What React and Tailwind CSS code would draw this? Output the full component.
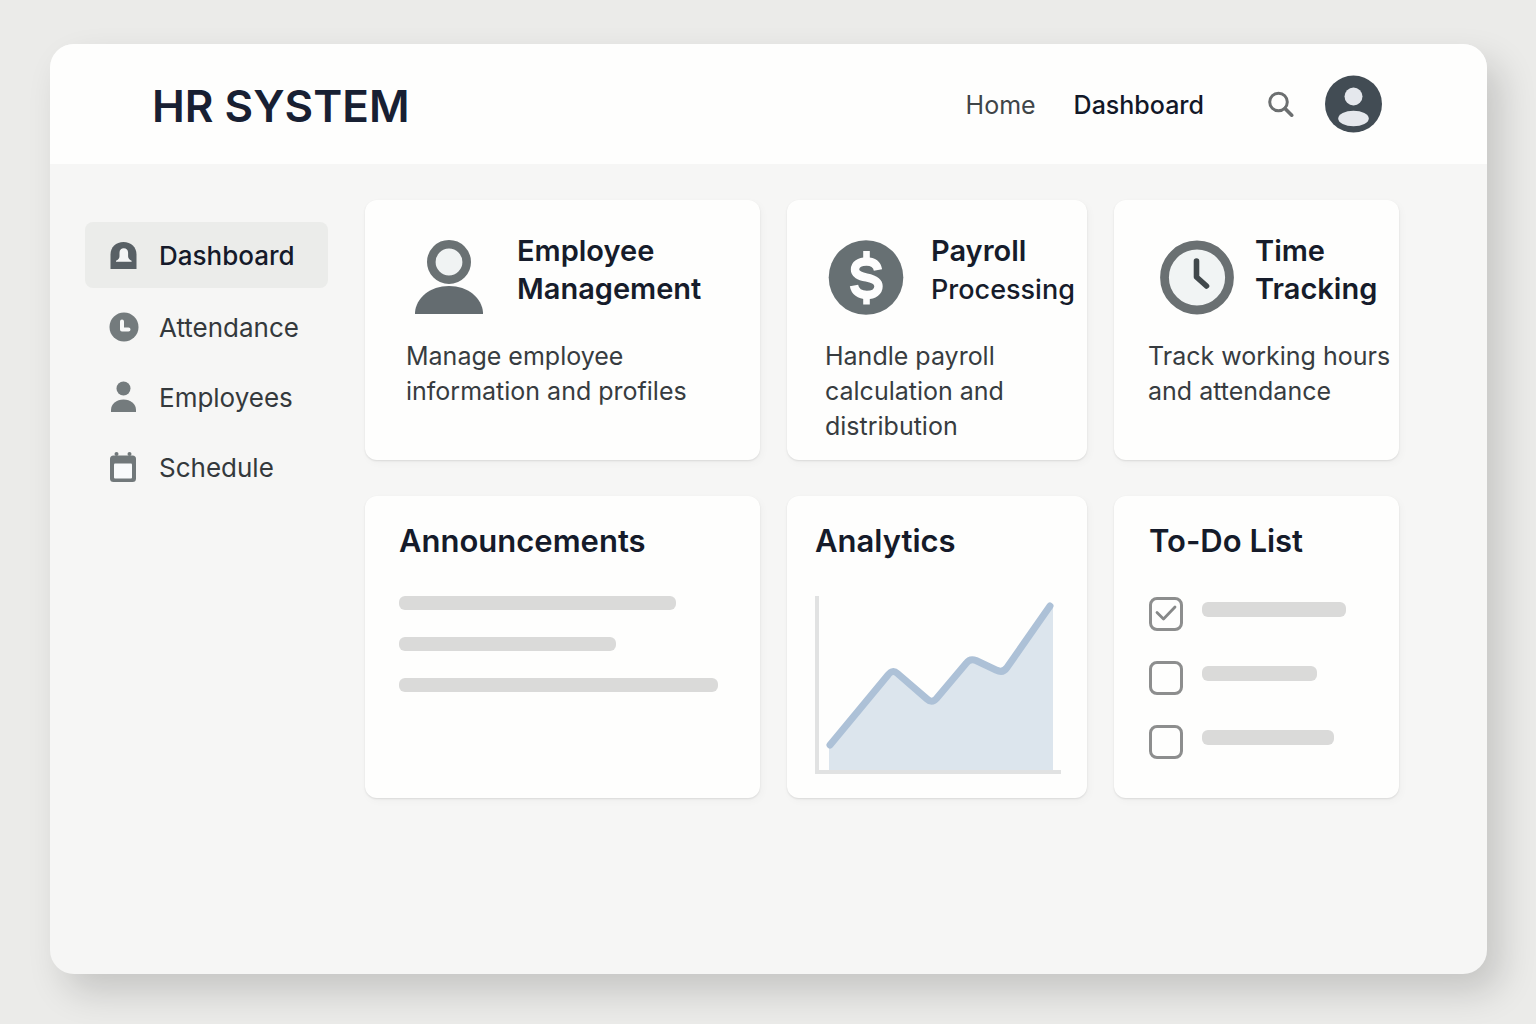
import React, { useState } from 'react';

const menuItems = [
    { name: 'Dashboard', icon: HomeIcon },
    { name: 'Attendance', icon: AttendanceIcon },
    { name: 'Employees', icon: EmployeesIcon },
    { name: 'Schedule', icon: ScheduleIcon },
];

const announcements = [
    { id: 1, width: 277 },
    { id: 2, width: 217 },
    { id: 3, width: 319 },
];

function HomeIcon() {
    return (
        <svg width="30" height="30" viewBox="0 0 30 30" aria-hidden="true">
            <path d="M1.500 29V14.500C1.500 7 7 2 14.500 2s13 5 13 12.500V29z" fill="#586065" />
            <path d="M7 21.700v-1c2-1 3.500-2 3.500-4.500v-3.500c0-2.800 1.700-4.400 4.300-4.400s4.300 1.600 4.300 4.400v3.500c0 2.500 1.500 3.500 3.500 4.500v1z" fill="#f4f5f5" />
        </svg>
    );
}

function AttendanceIcon() {
    return (
        <svg width="30" height="30" viewBox="0 0 30 30" aria-hidden="true">
            <circle cx="15" cy="15" r="14.500" fill="#747b7d" />
            <path d="M13 9.500v8h6.500" fill="none" stroke="#f8f9f9" strokeWidth="4" strokeLinecap="round" strokeLinejoin="round" />
        </svg>
    );
}

function EmployeesIcon() {
    return (
        <svg width="30" height="32" viewBox="0 0 30 32" aria-hidden="true">
            <circle cx="14.500" cy="7.500" r="7" fill="#747b7d" />
            <path d="M2 31v-2c0-6 5.500-10.500 12.500-10.500S27 23 27 29v2z" fill="#747b7d" />
        </svg>
    );
}

function ScheduleIcon() {
    return (
        <svg width="30" height="32" viewBox="0 0 30 32" aria-hidden="true">
            <rect x="1" y="4.500" width="26" height="26.500" rx="3.500" fill="#71787a" />
            <rect x="5" y="12.500" width="18" height="15" rx="1" fill="#f8fafb" />
            <circle cx="7.500" cy="3" r="2" fill="#71787a" />
            <circle cx="20.500" cy="3" r="2" fill="#71787a" />
        </svg>
    );
}

const ManagementIcon = () => (
    <svg width="70" height="76" viewBox="0 0 70 76" className="shrink-0" aria-hidden="true">
        <circle cx="34" cy="23" r="17.700" fill="#f0f3f3" stroke="#6a7173" strokeWidth="8.600" />
        <path d="M0 75v-1.500C1 59 15 47 34 47s33 12 34 26.500V75z" fill="#646c70" />
    </svg>
);

const PayrollIcon = () => (
    <svg width="76" height="76" viewBox="0 0 76 76" className="shrink-0" aria-hidden="true">
        <circle cx="38" cy="38.500" r="37.300" fill="#677073" />
        <g fill="none" stroke="#fdfdfd">
            <path
                d="M50 31C49 25.500 45 22.500 38.500 22.500c-7 0-11.500 3.300-11.500 8 0 4.600 4 6.500 11.500 8s12 3.500 12 8.700c0 5.300-4.700 8.800-11.700 8.800-7.300 0-11.800-3.500-12.800-9.500"
                strokeWidth="8.400"
            />
            <path d="M38.500 12v8M38.500 58v7.500" strokeWidth="6.600" />
        </g>
    </svg>
);

const TimeIcon = () => (
    <svg width="76" height="76" viewBox="0 0 76 76" className="shrink-0" aria-hidden="true">
        <circle cx="38" cy="38.500" r="32.500" fill="#f1f4f4" stroke="#6a7072" strokeWidth="8.800" />
        <path d="M37.500 22v16l10 9" fill="none" stroke="#41484b" strokeWidth="5.600" strokeLinecap="round" strokeLinejoin="round" />
    </svg>
);

const AnalyticsChart = () => (
    <svg width="248" height="178" viewBox="0 0 248 178" role="img" aria-label="Analytics">
        <path d="M14 149L77 76l40 31 39-43 31 12L235 10h3v164H14z" fill="#dce5ed" />
        <path d="M2 0v176h244" fill="none" stroke="#e1e2e2" strokeWidth="4" />
        <path
            d="M15 149L73 79q4.500-6 9.500-1.500L112 103q5 4.500 9.500-.5L151 67.500q4-5.500 10-3l20 9.500q7 3.500 11-2.500L235 10"
            fill="none"
            stroke="#adc1d7"
            strokeWidth="7"
            strokeLinecap="round"
            strokeLinejoin="round"
        />
    </svg>
);

const Card = ({ className, children }) => (
    <section className={`rounded-xl bg-[#fefefd] shadow-[0_1px_2px_rgba(0,0,0,0.10),2px_3px_8px_rgba(0,0,0,0.03)] ${className}`}>
        {children}
    </section>
);

const Header = () => (
    <header className="flex items-center justify-between bg-[#fefefd] h-[120px] pl-[102px] pr-[104px]">
        <h1 className="text-[44px] font-semibold text-[#182033] leading-none pt-1">HR SYSTEM</h1>
        <div className="flex items-center">
            <nav className="flex items-center gap-[38px] pt-1 text-[25px]">
                <a href="#home" className="text-[#3f4548]">Home</a>
                <a href="#dashboard" className="font-medium text-[#121828]">Dashboard</a>
            </nav>
            <button type="button" aria-label="Search" className="ml-16">
                <svg width="26" height="26" viewBox="0 0 26 26" fill="none" stroke="#6c6f70" strokeLinecap="round" aria-hidden="true">
                    <circle cx="10.500" cy="11" r="8.800" strokeWidth="3" />
                    <path d="M17 17.500l6.700 6.700" strokeWidth="3.600" />
                </svg>
            </button>
            <button type="button" aria-label="Account" className="ml-[31px]">
                <svg width="58" height="58" viewBox="0 0 58 58" aria-hidden="true">
                    <circle cx="28.500" cy="29" r="28.500" fill="#424c54" />
                    <circle cx="28.500" cy="21.500" r="9" fill="#e5e8ed" />
                    <ellipse cx="28.500" cy="43.500" rx="15.300" ry="7.700" fill="#e5e8ed" />
                </svg>
            </button>
        </div>
    </header>
);

const Sidebar = () => (
    <nav className="w-[243px] shrink-0 pt-[22px]">
        <ul>
            {menuItems.map(({ name, icon: Icon }, index) => (
                <li key={name}>
                    <a
                        href={`#${name.toLowerCase()}`}
                        className={`flex items-center gap-5 pl-6 text-[26px] ${
                            index === 0
                                ? 'h-[66px] mb-1 rounded-lg bg-[#ebecea] font-medium text-[#151a2a]'
                                : 'h-[70px] text-[#34393c]'
                        }`}
                    >
                        <Icon />
                        {name}
                    </a>
                </li>
            ))}
        </ul>
    </nav>
);

const TodoList = () => {
    const [todos, setTodos] = useState([
        { id: 1, width: 144, done: true },
        { id: 2, width: 115, done: false },
        { id: 3, width: 132, done: false },
    ]);

    const toggle = (id) => setTodos(todos.map((t) => (t.id === id ? { ...t, done: !t.done } : t)));

    return (
        <ul className="mt-9 flex flex-col gap-[30px]">
            {todos.map((todo) => (
                <li key={todo.id}>
                    <label className="flex items-start gap-[19px]">
                        <span className="grid">
                            <input
                                type="checkbox"
                                aria-label={`Task ${todo.id}`}
                                checked={todo.done}
                                onChange={() => toggle(todo.id)}
                                className="col-start-1 row-start-1 appearance-none size-[34px] rounded-lg border-[3px] border-[#8d8e8e]"
                            />
                            {todo.done && (
                                <svg width="34" height="34" viewBox="0 0 34 34" className="col-start-1 row-start-1 pointer-events-none" aria-hidden="true">
                                    <path d="M8 15.500l6.500 6.500L26 10" fill="none" stroke="#868888" strokeWidth="2.800" strokeLinecap="round" strokeLinejoin="round" />
                                </svg>
                            )}
                        </span>
                        <span className="mt-[5px] h-[15px] rounded-md bg-[#dadad9]" style={{ width: todo.width }} />
                    </label>
                </li>
            ))}
        </ul>
    );
};

const App = () => {
    return (
        <div className="min-h-screen flex bg-[#ebebe9] pt-11 pb-[50px] pl-[50px] pr-[49px] font-['Inter',sans-serif]">
            <div className="flex-1 rounded-3xl overflow-hidden bg-[#f6f6f5] shadow-[14px_18px_36px_rgba(0,0,0,0.16)]">
                <Header />
                <div className="flex items-start gap-[37px] pl-[35px] pr-[88px] pt-9">
                    <Sidebar />
                    <main className="flex-1 grid grid-cols-[minmax(0,395fr)_minmax(0,300fr)_minmax(0,285fr)] gap-x-[27px] gap-y-9">
                        <Card className="pt-8 pb-4 pl-[41px] pr-4">
                            <div className="flex items-start gap-8 pl-[9px]">
                                <div className="pt-[7px]"><ManagementIcon /></div>
                                <h2 className="text-[29px] leading-[38px] font-semibold text-[#161c2b]">Employee<br />Management</h2>
                            </div>
                            <p className="mt-6 text-[25px] leading-[35px] text-[#373c40]">Manage employee<br />information and profiles</p>
                        </Card>
                        <Card className="pt-8 pb-4 pl-[38px] pr-2">
                            <div className="flex items-start gap-[27px] pl-[3px]">
                                <div className="pt-[7px]"><PayrollIcon /></div>
                                <h2 className="text-[29px] leading-[38px] font-semibold text-[#161c2b]">Payroll<br /><span className="text-[27px] font-medium">Processing</span></h2>
                            </div>
                            <p className="mt-6 text-[25px] leading-[35px] text-[#373c40]">Handle payroll<br />calculation and<br />distribution</p>
                        </Card>
                        <Card className="pt-8 pb-4 pl-[34px] pr-2">
                            <div className="flex items-start gap-5 pl-[11px]">
                                <div className="pt-[7px]"><TimeIcon /></div>
                                <h2 className="text-[29px] leading-[38px] font-semibold text-[#161c2b]">Time<br />Tracking</h2>
                            </div>
                            <p className="mt-6 text-[25px] leading-[35px] text-[#373c40]">Track working hours<br />and attendance</p>
                        </Card>
                        <Card className="pt-[25px] pb-6 pl-[34px] pr-4">
                            <h2 className="text-[31px] leading-[40px] font-semibold text-[#151b2a]">Announcements</h2>
                            <ul className="mt-[35px] flex flex-col gap-[27px]">
                                {announcements.map((item) => (
                                    <li key={item.id} className="h-[14px] rounded-md bg-[#dadad9]" style={{ width: item.width }} />
                                ))}
                            </ul>
                        </Card>
                        <Card className="pt-[25px] pb-6 pl-7 pr-4">
                            <h2 className="text-[31px] leading-[40px] font-semibold text-[#151b2a]">Analytics</h2>
                            <div className="mt-[35px]"><AnalyticsChart /></div>
                        </Card>
                        <Card className="pt-[25px] pb-6 pl-[35px] pr-4">
                            <h2 className="text-[31px] leading-[40px] font-semibold text-[#151b2a]">To-Do List</h2>
                            <TodoList />
                        </Card>
                    </main>
                </div>
            </div>
        </div>
    );
};

export default App;
